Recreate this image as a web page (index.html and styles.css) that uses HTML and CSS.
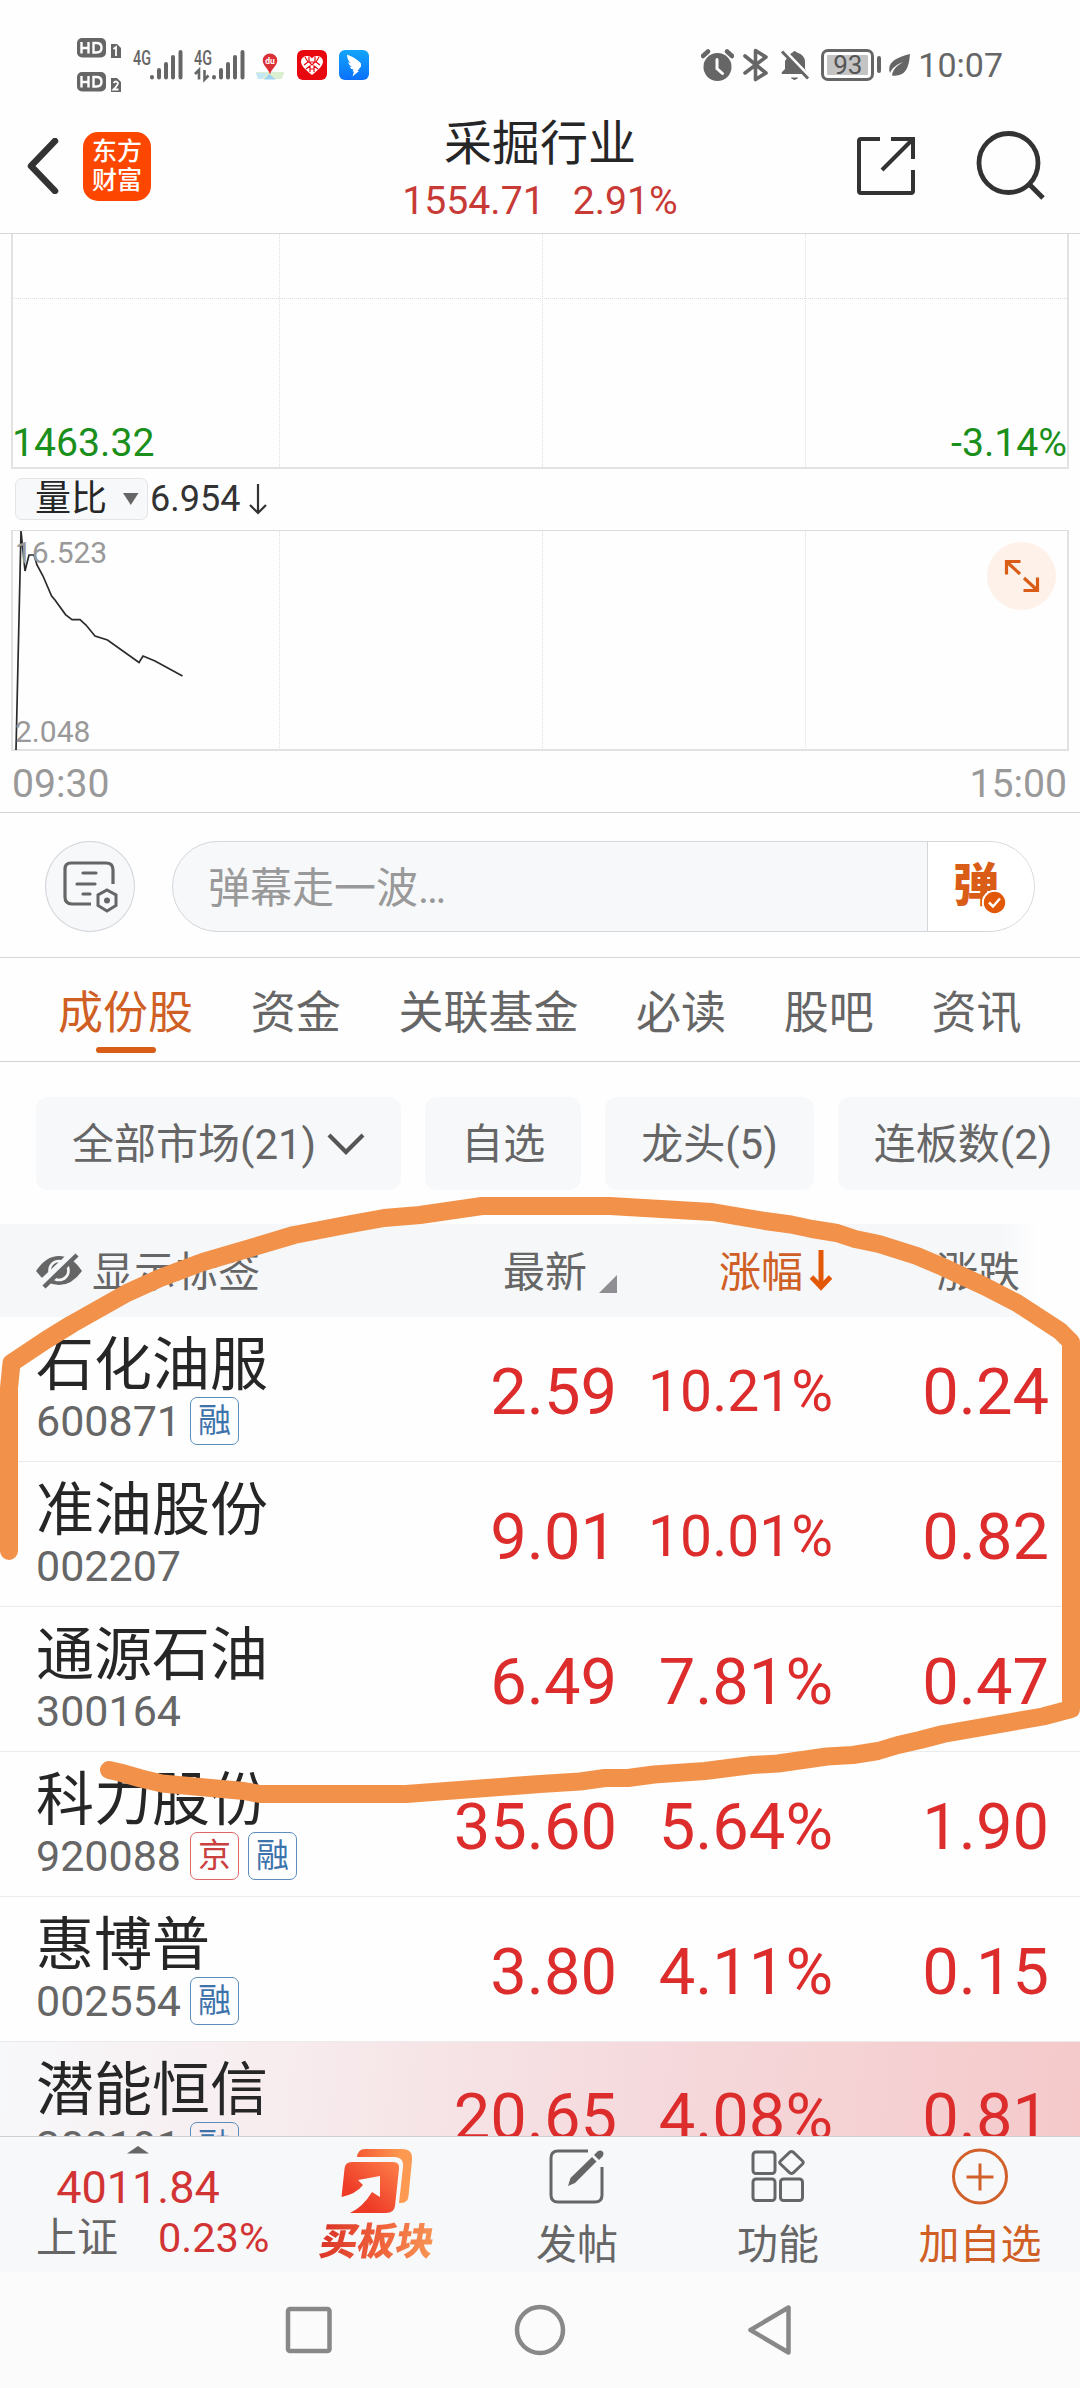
FILE: index.html
```html
<!DOCTYPE html>
<html lang="zh-CN">
<head>
<meta charset="utf-8">
<title>采掘行业</title>
<link rel="stylesheet" href="styles.css">
</head>
<body>
<div class="screen">
  <div class="status">
    <div class="status-left">
      <div class="hd-stack">
        <svg width="46" height="21" viewBox="0 0 46 21"><rect x="1" y="1" width="29" height="19.500" rx="5" fill="#666"/><path d="M5.500 5v11.500M12.500 5v11.500M5.500 11h7M17.500 6v9.500h3q5 0 5-4.750t-5-4.750z" fill="none" stroke="#fff" stroke-width="2.400"/><path d="M35 7h6l4 4v10H35z" fill="#666"/><path d="M37.500 12l2.500-2v9" fill="none" stroke="#fff" stroke-width="1.800"/></svg>
        <svg width="46" height="21" viewBox="0 0 46 21"><rect x="1" y="1" width="29" height="19.500" rx="5" fill="#666"/><path d="M5.500 5v11.500M12.500 5v11.500M5.500 11h7M17.500 6v9.500h3q5 0 5-4.750t-5-4.750z" fill="none" stroke="#fff" stroke-width="2.400"/><path d="M35 7h6l4 4v10H35z" fill="#666"/><path d="M37.500 12q2.500-3 4.500 0q0 2-4.500 6.500h5" fill="none" stroke="#fff" stroke-width="1.800"/></svg>
      </div>
      <svg class="sig sig1" width="50" height="40" viewBox="0 -4 50 40"><text x="0" y="15.500" class="net" textLength="18" lengthAdjust="spacingAndGlyphs">4G</text><path d="M19 28v.5M26 21v7.500M33 15v13.500M40 8v20.500M47.500 3v25.500" stroke="#666" stroke-width="4" stroke-linecap="round"/></svg>
      <svg class="sig sig2" width="51" height="40" viewBox="0 -4 51 40"><text x="0" y="15.500" class="net" textLength="18" lengthAdjust="spacingAndGlyphs">4G</text><path d="M1 25l4-4v9.500M10.500 21v9.500l4-4" stroke="#666" stroke-width="2.600" fill="none"/><path d="M20 28v.5M27 21v7.500M34 15v13.500M41 8v20.500M48.500 3v25.500" stroke="#666" stroke-width="4" stroke-linecap="round"/></svg>
      <svg class="app" width="30" height="30" viewBox="0 0 30 30"><path d="M1 22h28v1.500l-2.500 5.500H3z" fill="#d9efd0"/><path d="M1 23h11l-5 6H3z" fill="#c5e6f5"/><path d="M14 24l7 5.500H9z" fill="#9fd4f2"/><path d="M15 3.500a7.300 7 0 0 1 7.300 7c0 5-6 8.500-7.300 14c-1.300-5.500-7.300-9-7.300-14A7.300 7 0 0 1 15 3.500z" fill="#dc3037"/><text x="15" y="13.500" class="du">du</text></svg>
      <svg class="app" width="30" height="30" viewBox="0 0 30 30"><rect width="30" height="30" rx="6" fill="#e9070f"/><path d="M15 25C8 19 4 16 4 11C5 5.500 12 4.500 15 8.500C18 4.500 25 5.500 26 11C26 16 22 19 15 25z" fill="#fff"/><path d="M8 7l3 5-4 3M12 7v5l3 3 3-3V7M22 7l-3 5 4 3M9 19l4-3v6M21 19l-4-3v6M11 12h8M13 19h4" fill="none" stroke="#e9070f" stroke-width="1.200"/></svg>
      <svg class="app" width="30" height="30" viewBox="0 0 30 30"><defs><linearGradient id="ding" x2="0" y2="1"><stop stop-color="#12a5fb"/><stop offset="1" stop-color="#0b70fa"/></linearGradient></defs><rect width="30" height="30" rx="6" fill="url(#ding)"/><path d="M8 4.500Q18 8.500 22 13.500l0 3L18.500 21h1.500L13.500 26.500l1.500-5h-1.500l1-2q-3-.5-4-3l2.500 .5q-3.500-2-4-5l3 1.500Q8 10 8 4.500z" fill="#fff"/></svg>
    </div>
    <div class="status-right">
      <svg width="33" height="32" viewBox="0 0 33 32"><circle cx="16.500" cy="18" r="14" fill="#666"/><path d="M2 7l5-4.500M31 7l-5-4.500" stroke="#666" stroke-width="4.500" stroke-linecap="round"/><path d="M16 10.500v9l5.500 5" fill="none" stroke="#fff" stroke-width="3" stroke-linecap="round"/></svg>
      <svg class="bt" width="26" height="34" viewBox="0 0 26 34"><path d="M2 8l21 17-10.500 6.500v-29L23 9 2 25" fill="none" stroke="#666" stroke-width="3.600" stroke-linejoin="round" stroke-linecap="round"/></svg>
      <svg class="bell" width="30" height="32" viewBox="0 0 30 32"><path d="M8 7.500Q11 4 12.500 3.500q2-3 4.500 0Q25 6 25 13v7l3 5H2q-1-1 0-2l3-3v-8z" fill="#666"/><path d="M11.500 29h6q-3 3-6 0" fill="#666" stroke="#666"/><path d="M4 1l28 29" stroke="#fff" stroke-width="3"/><path d="M2 2.500l26 27" stroke="#666" stroke-width="3"/></svg>
      <div class="battery">93</div><i class="nub"></i>
      <svg class="leaf" width="23" height="24" viewBox="0 0 23 24"><path d="M22 1C21 17 16 24 4 22.500C5 15 11 11 16 9C9 11 4 15 2 20C-2 9 10 4 22 1z" fill="#666"/></svg>
      <span class="clock">10:07</span>
    </div>
  </div>

  <header class="head">
    <div class="head-left">
      <svg width="34" height="56" viewBox="0 0 34 56"><path d="M29 3L5 28l24 25" fill="none" stroke="#333" stroke-width="6.500" stroke-linecap="round" stroke-linejoin="round"/></svg>
      <div class="logo"><span>东方</span><span>财富</span></div>
    </div>
    <div class="title"><h1>采掘行业</h1><p><span>1554.71</span><span>2.91%</span></p></div>
    <div class="head-right">
      <svg width="60" height="60" viewBox="0 0 60 60"><path d="M24 3H5q-2 0-2 2v50q0 2 2 2h50q2 0 2-2V34M35 3h22v20M57 3L26 34" fill="none" stroke="#333" stroke-width="4"/></svg>
      <svg width="70" height="70" viewBox="0 0 70 70"><circle cx="32.500" cy="32" r="29.500" fill="none" stroke="#333" stroke-width="4.800"/><path d="M53 53l14 14" stroke="#333" stroke-width="5"/></svg>
    </div>
  </header>

  <section class="plot price">
    <svg width="1080" height="236" viewBox="0 0 1080 236"><path d="M12 0V234H1068V0" fill="none" stroke="#e2e2e2" stroke-width="2"/><path d="M279.500 0V233M542.500 0V233M805.500 0V233M12 64.500H1068" fill="none" stroke="#dedede" stroke-dasharray="1 1"/></svg>
    <div class="ends"><span>1463.32</span><span>-3.14%</span></div>
  </section>
  <div class="picker">
    <div class="select">量比<svg width="16" height="13" viewBox="0 0 16 13"><path d="M0 0h15.500L7.800 12z" fill="#666"/></svg></div>
    <span>6.954</span>
    <svg class="down" width="20" height="32" viewBox="0 0 20 32"><path d="M10 1v29M2 22l8 8 8-8" fill="none" stroke="#333" stroke-width="2.200"/></svg>
  </div>
  <section class="plot ratio">
    <svg width="1080" height="222" viewBox="0 530 1080 222"><path d="M12 530.500H1068" stroke="#ddd"/><path d="M12 530V750H1068V530" fill="none" stroke="#e2e2e2" stroke-width="2"/><path d="M279.500 531V750M542.500 531V750M805.500 531V750" fill="none" stroke="#dedede" stroke-dasharray="1 1"/><polyline points="16,750 21,531 25,571 29,555 34,555 37,565 43,576 51.600,596 55,600 65.500,614.600 72,619.600 80,619.600 86,625 95,636 107.500,640 139,662.500 143,656 155,661 182.500,676" fill="none" stroke="#2b2b2b" stroke-width="1.700"/></svg>
    <div class="scale"><span>16.523</span><span>2.048</span></div>
    <div class="expand"><svg width="36" height="36" viewBox="0 0 36 36"><path d="M2.500 16.500V3.500h14M3 4l13 12M20 20l13 12M33.500 19.500v13h-14" fill="none" stroke="#d95d17" stroke-width="3.200"/></svg></div>
  </section>
  <div class="times"><span>09:30</span><span>15:00</span></div>

  <div class="barrage">
    <div class="round"><svg width="56" height="54" viewBox="0 0 56 54"><path d="M51 24V10q0-7-7-7H9Q3 3 3 9v28q0 7 7 7h19" fill="none" stroke="#666" stroke-width="3.200"/><path d="M21 13h13M15 24h18M21 34h7" stroke="#666" stroke-width="3.200" stroke-linecap="round"/><path d="M45 30l9 5v10.500l-9 5.500-9-5.500V35z" fill="none" stroke="#666" stroke-width="3"/><circle cx="45" cy="40.500" r="3" fill="#666"/></svg></div>
    <div class="input"><span class="ph">弹幕走一波…</span>
      <div class="dan"><span>弹</span><svg width="25" height="25" viewBox="0 0 25 25"><circle cx="12.500" cy="12.500" r="11.700" fill="#e25806" stroke="#fff" stroke-width="2"/><path d="M7 12.500l4 4 7-8" fill="none" stroke="#fff" stroke-width="2.500"/></svg></div>
    </div>
  </div>

  <nav class="tabs"><span class="on">成份股</span><span>资金</span><span>关联基金</span><span>必读</span><span>股吧</span><span>资讯</span></nav>

  <div class="chips">
    <div class="chip"><span>全部市场(21)</span><svg width="38" height="24" viewBox="0 0 38 24"><path d="M2 3l17 17L36 3" fill="none" stroke="#555" stroke-width="4.200"/></svg></div>
    <div class="chip"><span>自选</span></div>
    <div class="chip"><span>龙头(5)</span></div>
    <div class="chip"><span>连板数(2)</span></div>
  </div>

  <div class="thead">
    <div class="show"><svg width="46" height="36" viewBox="0 0 46 36"><path d="M0 18Q10 3 23 3Q36 3 46 18Q36 32 23 32Q10 32 0 18z" fill="#666"/><circle cx="23" cy="17.500" r="9.500" fill="none" stroke="#f6f7f9" stroke-width="2.600"/><path d="M5 32L38 1" stroke="#f6f7f9" stroke-width="9"/><path d="M8 34L41 2" stroke="#666" stroke-width="4.500"/></svg><span>显示标签</span></div>
    <div class="c-last"><span>最新</span><svg width="18" height="18" viewBox="0 0 18 18"><path d="M18 0v18H0z" fill="#8f8f93"/></svg></div>
    <div class="c-pct"><span>涨幅</span><svg width="24" height="42" viewBox="0 0 24 42"><path d="M12 0v36" stroke="#e25806" stroke-width="5"/><path d="M2.500 27L12 37l9.500-10" fill="none" stroke="#e25806" stroke-width="5"/></svg></div>
    <div class="c-chg"><span>涨跌</span></div>
  </div>

  <main class="rows">
    <div class="row"><div class="stock"><b>石化油服</b><p>600871<i>融</i></p></div><span>2.59</span><span class="small">10.21%</span><span>0.24</span></div>
    <div class="row"><div class="stock"><b>准油股份</b><p>002207</p></div><span>9.01</span><span class="small">10.01%</span><span>0.82</span></div>
    <div class="row"><div class="stock"><b>通源石油</b><p>300164</p></div><span>6.49</span><span>7.81%</span><span>0.47</span></div>
    <div class="row"><div class="stock"><b>科力股份</b><p>920088<i class="jing">京</i><i>融</i></p></div><span>35.60</span><span>5.64%</span><span>1.90</span></div>
    <div class="row"><div class="stock"><b>惠博普</b><p>002554<i>融</i></p></div><span>3.80</span><span>4.11%</span><span>0.15</span></div>
    <div class="row flash"><div class="stock"><b>潜能恒信</b><p>300191<i>融</i></p></div><span>20.65</span><span>4.08%</span><span>0.81</span></div>
  </main>

  <footer class="dock">
    <div class="index"><svg width="22" height="8" viewBox="0 0 22 8"><path d="M0 7.500L11 0l11 7.500z" fill="#666"/></svg><strong>4011.84</strong><p><span>上证</span><em>0.23%</em></p></div>
    <div class="item buy"><svg width="72" height="66" viewBox="0 0 72 66"><defs><linearGradient id="g1" x1="0" y1="1" x2="1" y2="0"><stop offset=".3" stop-color="#ee3b28"/><stop offset="1" stop-color="#fd8149"/></linearGradient><linearGradient id="g2" x1="0" y1="0" x2="1" y2="0"><stop stop-color="#f55a34"/><stop offset=".8" stop-color="#fd9950"/></linearGradient></defs><path d="M16 9Q17 1 24 1H61Q72 1 71 12L67.500 48Q67 55 60 55H58L62 19Q63 9 53 9z" fill="url(#g2)"/><path d="M11 14H52Q59 14 58 21L54 58Q53 65 45 65H9Q22 59 31 44L39 49V28L17 32L22 37Q15 46 .500 49L3.500 21Q4 14 11 14z" fill="url(#g1)"/></svg><span>买板块</span></div>
    <div class="item"><svg width="56" height="56" viewBox="0 0 56 56"><path d="M39 2H9Q2 2 2 9V46Q2 53 9 53H46Q53 53 53 46V18" fill="none" stroke="#666" stroke-width="3"/><path d="M19 37l2.500-8L43 8l4.500 4.500L26 34z" fill="#666"/><path d="M45 6l3.500-3.500q3-2 5 0t0 5L50 11z" fill="#666"/></svg><span>发帖</span></div>
    <div class="item"><svg width="56" height="56" viewBox="0 0 56 56"><g fill="none" stroke="#666" stroke-width="3"><rect x="3" y="3" width="22" height="21.500" rx="3"/><rect x="3" y="30" width="22" height="21.500" rx="3"/><rect x="30.500" y="30" width="22" height="21.500" rx="3"/><path d="M40 3q1.500-1 3 0l9.500 9q1.500 1.500 0 3l-9.500 9q-1.500 1-3 0l-9.500-9q-1.500-1.500 0-3z"/></g></svg><span>功能</span></div>
    <div class="item add"><svg width="58" height="58" viewBox="0 0 58 58"><circle cx="29" cy="28.500" r="26.500" fill="none" stroke="#d2602a" stroke-width="3"/><path d="M29 15.500v27M15.500 29h27" stroke="#d2602a" stroke-width="3"/></svg><span>加自选</span></div>
  </footer>
  <div class="sysnav">
    <svg width="48" height="48" viewBox="0 0 48 48"><rect x="3" y="3" width="41.500" height="42" rx="2" fill="none" stroke="#888" stroke-width="4.500"/></svg>
    <svg width="52" height="52" viewBox="0 0 52 52"><circle cx="26" cy="26" r="23" fill="none" stroke="#888" stroke-width="4.500"/></svg>
    <svg width="46" height="52" viewBox="0 0 46 52"><path d="M41.500 3.500v45L3.500 26z" fill="none" stroke="#888" stroke-width="4.500" stroke-linejoin="round"/></svg>
  </div>

  <svg class="stroke" width="1080" height="2388" viewBox="0 0 1080 2388"><polyline points="9,1551 9,1388 11.500,1363 46,1340 72,1324 127,1293 160,1278 203,1262 294,1235 351,1224 384,1218 420,1215 482,1206 610,1206 712,1212 765,1221 791,1224.500 812,1229 837,1233 855,1239 879,1244 917,1256 943,1267 984,1286 1017,1303 1060,1331 1071,1342 1071,1709 1043,1716.500 943,1734 920,1740 898,1745 878,1751 853,1755 827,1756.500 778,1763.500 752,1765 705,1771 654,1774.500 628,1778 605,1778 580,1781.500 540,1784 406,1794 260,1794 244,1791 162,1783.500 141,1778.500 120,1772.500 109,1770"/></svg>
</div>
</body>
</html>
```
FILE: styles.css
```css
* { box-sizing: border-box; }
body { margin: 0; background: #fefefe; font-family: Roboto, "Noto Sans CJK SC", sans-serif; color: #262626; }
svg { display: block; flex: none; }
h1, p { margin: 0; font-weight: 400; }
i, em { font-style: normal; }
b, strong { font-weight: 400; }

.screen { position: relative; width: 1080px; height: 2388px; overflow: hidden; display: flex; flex-direction: column; }
.screen > * { flex: none; }

.status { height: 104px; padding: 25px 77px 0 76px; display: flex; justify-content: space-between; align-items: center; }
.status-left, .status-right { display: flex; align-items: center; }
.hd-stack { display: flex; flex-direction: column; gap: 13px; }
.sig { margin-left: 11px; }
.app { margin-left: 12px; }
.sig2 + .app { margin-left: 10px; }
.net { font: 500 20px Roboto, sans-serif; fill: #666; }
.du { font: 700 8.500px Roboto, sans-serif; fill: #fff; text-anchor: middle; }
.bt { margin-left: 9px; }
.bell { margin-left: 11px; }
.battery { margin-left: 11px; width: 53px; height: 32px; border: 3px solid #666; border-radius: 7px; padding: 1px; background: #c4c4c4 content-box; color: #555; font-size: 26px; line-height: 24px; text-align: center; box-shadow: inset 0 0 0 3px #fff; }
.nub { width: 4px; height: 17px; margin-left: 3px; border-radius: 2px; background: #666; }
.leaf { margin-left: 7px; }
.clock { margin-left: 7px; font-size: 34px; line-height: 40px; color: #666; }

.head { height: 130px; border-bottom: 1px solid #d6d6d6; display: grid; grid-template-columns: 1fr auto 1fr; }
.head-left, .head-right { display: flex; align-items: center; height: 124px; }
.head-left { padding-left: 26px; gap: 23px; }
.head-right { padding-right: 34px; justify-content: flex-end; gap: 60px; }
.logo { width: 68px; height: 69px; border-radius: 15px; background: #fd4700; color: #fff; font-weight: 500; font-size: 25px; line-height: 29px; padding-top: 5px; display: flex; flex-direction: column; align-items: center; }
.title { padding-top: 12px; text-align: center; }
.title h1 { font-size: 48px; line-height: 56px; }
.title p { font-size: 39.200px; line-height: 58px; color: #c83a36; display: flex; gap: 28px; justify-content: center; }

.plot { display: grid; }
.plot > * { grid-area: 1 / 1; }
.price { height: 236px; }
.ends { display: flex; justify-content: space-between; align-items: flex-end; padding: 0 13px 4px 12px; font-size: 39.200px; line-height: 46px; color: #1b8f1b; }
.picker { height: 60px; padding: 6px 0 8px 15px; display: flex; align-items: center; font-size: 36px; line-height: 42px; color: #333; }
.select { width: 133px; height: 42px; border: 1px solid #e3e4e7; border-radius: 7px; background: #f7f8fa; padding: 0 8px 0 19px; display: flex; align-items: center; justify-content: space-between; font-size: 36px; line-height: 42px; color: #262626; }
.picker .down { margin-left: 8px; }
.picker > span { margin-left: 2px; }
.ratio { height: 222px; }
.scale { padding: 5px 0 2px 15px; display: flex; flex-direction: column; justify-content: space-between; font-size: 30px; line-height: 36px; color: #999; }
.expand { justify-self: end; margin: 12px 24px 0 0; width: 69px; height: 68px; border-radius: 50%; background: #fef1e9; display: grid; place-items: center; }
.times { height: 61px; border-bottom: 1px solid #d3d3d3; padding: 2px 13px 0 12px; display: flex; justify-content: space-between; font-size: 39.200px; line-height: 60px; color: #999; }

.barrage { height: 145px; border-bottom: 1px solid #d8d8d8; padding: 28px 45px 0; display: flex; gap: 37px; }
.round { width: 90px; height: 91px; border: 1px solid #d3d6da; border-radius: 50%; background: #f7f8fa; display: grid; place-items: center; }
.input { width: 863px; height: 91px; border: 1px solid #d3d6da; border-radius: 46px; background: #f7f8fa; overflow: hidden; display: flex; justify-content: space-between; }
.ph { padding-left: 35px; font-size: 42px; line-height: 94px; color: #999; }
.dan { width: 107px; border-left: 1px solid #d3d6da; background: #fff; padding: 16px 0 0 25px; display: grid; grid-template-columns: 54px; align-content: start; color: #d95d17; font-size: 46px; line-height: 54px; font-weight: 900; }
.dan > * { grid-area: 1 / 1; }
.dan svg { justify-self: end; align-self: end; margin-bottom: -3px; }

.tabs { height: 104px; border-bottom: 1px solid #d3d3d3; padding-left: 58px; display: flex; gap: 57.700px; font-size: 45px; line-height: 111px; color: #666; }
.tabs .on { color: #cf5f24; display: flex; flex-direction: column; align-items: center; }
.on::after { content: ""; width: 60px; height: 6px; margin-top: -22px; border-radius: 3px; background: #d95d17; }

.chips { height: 162px; padding: 35px 0 0 36px; display: flex; gap: 24px; overflow: hidden; font-size: 42px; color: #666; }
.chip { flex: none; height: 93px; padding: 0 36px; border-radius: 12px; background: #f7f8fa; display: flex; align-items: center; gap: 11px; white-space: nowrap; }
.chip span { line-height: 60px; padding-top: 3px; }

.thead { height: 93px; background: linear-gradient(90deg, #f6f7f9 1000px, #fefefe 1038px); display: flex; align-items: center; padding-left: 36px; font-size: 42px; line-height: 60px; color: #666; }
.thead > div { display: flex; align-items: center; }
.thead span { padding-top: 5px; }
.show { width: 467px; gap: 10px; }
.c-last { width: 216px; gap: 12px; }
.c-last svg { margin-top: 26px; }
.c-pct { width: 217px; gap: 6px; color: #cf5f24; }

.rows { height: 819px; overflow: hidden; }
.row { height: 145px; border-bottom: 1px solid #ebebeb; padding-left: 36px; display: grid; grid-template-columns: 341px 240px 216px 216px; font-size: 65px; line-height: 150px; color: #dc2c2c; }
.row > span { text-align: right; }
.row .small { font-size: 57px; line-height: 149px; }
.stock b { display: block; padding-top: 12px; font-size: 58px; line-height: 72px; color: #262626; }
.stock p { margin-top: -2px; display: flex; align-items: center; gap: 9px; font-size: 43px; line-height: 44px; color: #666; }
.stock i { width: 49px; height: 48px; margin: -2px 0; border: 1px solid #5b8dbd; border-radius: 7px; font-size: 33px; line-height: 46px; text-align: center; color: #3d73ab; }
.stock .jing { border-color: #d66; color: #c9403f; }
.flash { background: linear-gradient(96deg, #f7f8fa 0%, #f7ebed 28%, #f5d9dc 60%, #f5c9ca 100%); }

.dock { height: 136px; border-top: 1px solid #cfcfd2; background: #f7f8fa; display: grid; grid-template-columns: 276px 202px 198px 204px 200px; }
.index { display: flex; flex-direction: column; align-items: center; padding-top: 9px; color: #d23434; }
.index strong { font-size: 45px; line-height: 52px; margin-top: 8px; }
.index p { width: 100%; padding-left: 36px; display: flex; gap: 40px; font-size: 41.500px; line-height: 48px; }
.index p span { color: #666; font-size: 41px; }
.item { display: flex; flex-direction: column; align-items: center; padding-top: 11px; font-size: 41px; color: #666; }
.item span { line-height: 48px; margin-top: 15px; }
.add { color: #cf5f24; }
.item svg { height: 58px; }
.buy svg { height: 66px; }
.buy span { font-size: 38px; font-weight: 900; line-height: 44px; margin-top: 6px; padding: 0 4px; transform: skewX(-10deg); background: linear-gradient(90deg, #d93025, #f0643c 55%, #f79a57); background-clip: text; -webkit-background-clip: text; color: transparent; }

.sysnav { height: 116px; background: #fbfbfb; display: flex; align-items: center; padding-left: 285px; gap: 181px; }

.stroke { position: absolute; left: 0; top: 0; pointer-events: none; }
.stroke polyline { fill: none; stroke: #f2924a; stroke-width: 18; stroke-linecap: round; stroke-linejoin: round; }
```
